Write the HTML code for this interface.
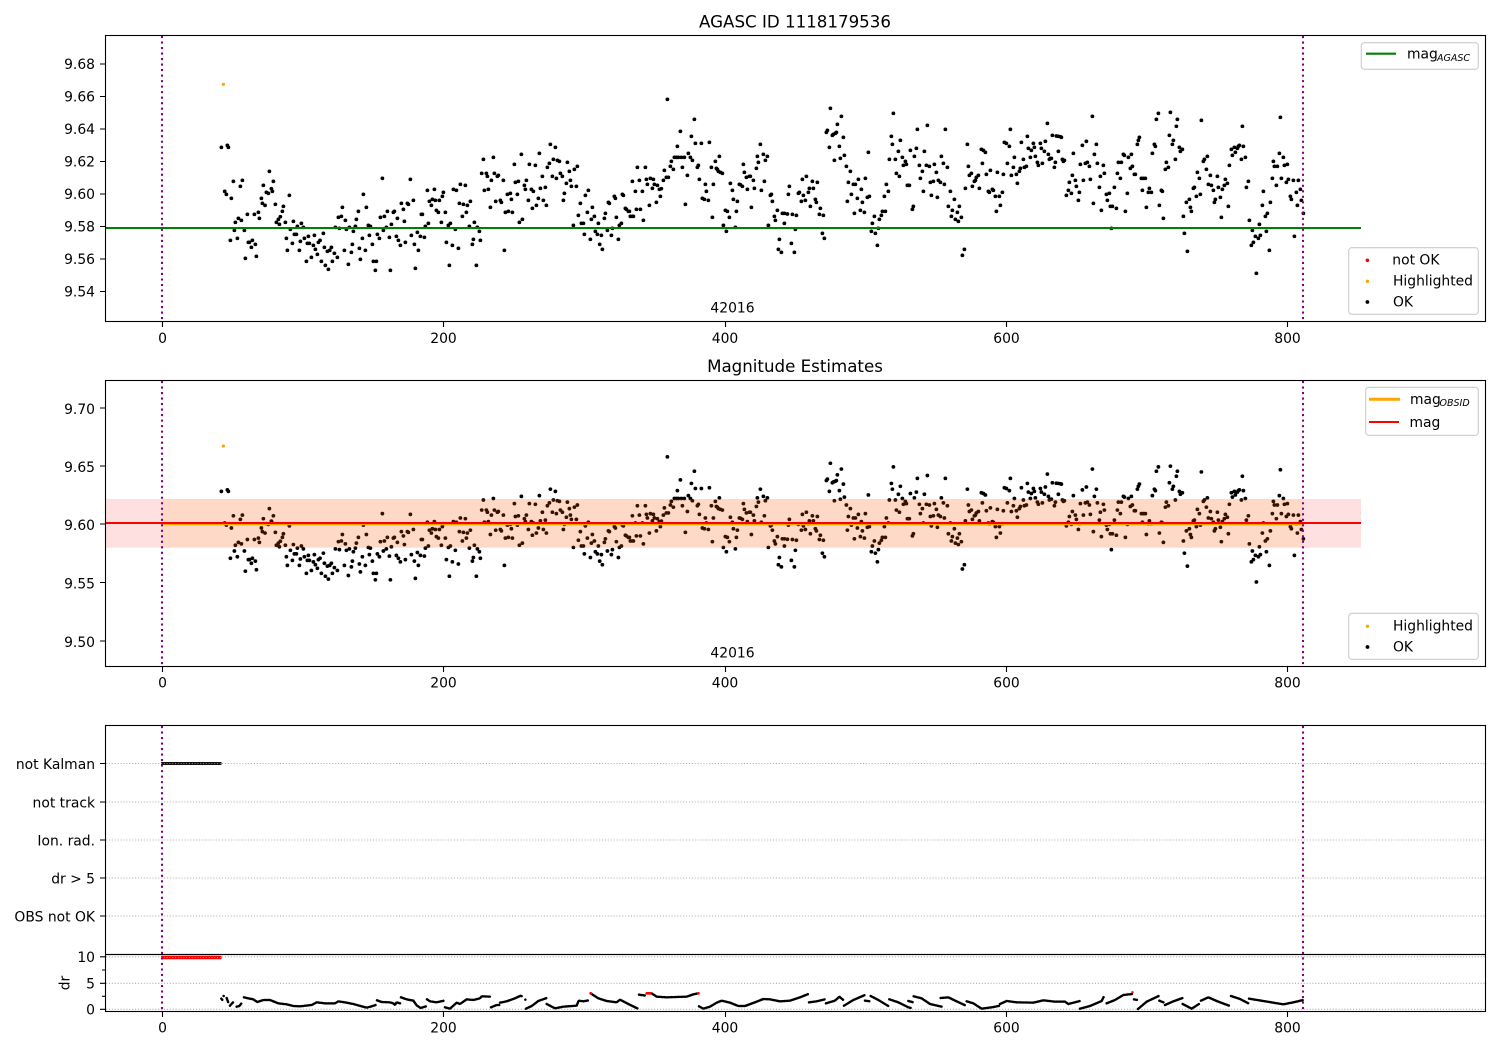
<!DOCTYPE html>
<html>
<head>
<meta charset="utf-8">
<title>AGASC ID 1118179536</title>
<style>
html,body{margin:0;padding:0;background:#fff;}
svg{display:block;}
text{font-family:"DejaVu Sans",sans-serif;font-size:13.89px;fill:#000;}
.r{text-anchor:end;}
.m{text-anchor:middle;}
.t{font-size:16.67px;text-anchor:middle;}
.i{font-style:italic;font-size:9.5px;}
.a{fill:none;stroke:#000;stroke-width:1.1;}
.k{stroke:#000;stroke-width:1.1;fill:none;}
.g{stroke:#b0b0b0;stroke-width:1.1;stroke-dasharray:1.1,1.8;fill:none;}
.v{stroke:#800080;stroke-width:2.08;stroke-dasharray:2.08,3.43;fill:none;}
.l{fill:#fff;fill-opacity:.8;stroke:#ccc;stroke-width:1.1;}
.d{fill:none;stroke:#000;stroke-width:7.5;stroke-linejoin:round;stroke-linecap:round;stroke-dasharray:.1,4.2;}
</style>
</head>
<body>
<svg width="1500" height="1050" viewBox="0 0 1500 1050" xmlns="http://www.w3.org/2000/svg">
<defs>
<path id="p1" fill="none" stroke="#000" stroke-width="3.7" stroke-linecap="round" vector-effect="non-scaling-stroke" d="M364 352h.3M382 346h.3M385 352h.3M374 484h.3M379 493h.3M394 505h.3M400 454h.3M427 451h.3M421 469h.3M406 577h.3M415 565h.3M424 571h.3M403 601h.3M391 631h.3M412 625h.3M433 601h.3M442 553h.3M445 637h.3M448 637h.3M457 631h.3M454 652h.3M466 643h.3M436 685h.3M469 679h.3M463 553h.3M475 547h.3M478 565h.3M484 505h.3M487 520h.3M495 526h.3M490 466h.3M499 487h.3M505 490h.3M508 424h.3M514 476h.3M517 484h.3M520 454h.3M526 523h.3M529 577h.3M535 568h.3M538 583h.3M541 560h.3M547 544h.3M550 529h.3M556 577h.3M568 496h.3M559 625h.3M562 661h.3M571 598h.3M577 640h.3M580 574h.3M583 613h.3M589 613h.3M592 589h.3M598 661h.3M601 634h.3M604 580h.3M610 592h.3M613 625h.3M619 694h.3M622 640h.3M625 619h.3M628 640h.3M634 682h.3M640 646h.3M643 616h.3M646 658h.3M652 673h.3M655 637h.3M660 631h.3M664 694h.3M670 610h.3M673 652h.3M676 706h.3M682 664h.3M685 718h.3M689 661h.3M694 652h.3M697 694h.3M703 670h.3M712 682h.3M706 592h.3M718 595h.3M715 562h.3M724 559h.3M727 532h.3M733 661h.3M736 571h.3M739 598h.3M745 703h.3M748 592h.3M754 667h.3M757 643h.3M760 604h.3M766 589h.3M769 568h.3M775 544h.3M778 655h.3M781 688h.3M787 625h.3M790 493h.3M796 661h.3M799 532h.3M805 586h.3M808 616h.3M811 589h.3M817 643h.3M820 694h.3M826 721h.3M829 694h.3M832 613h.3M838 625h.3M841 562h.3M847 445h.3M850 601h.3M853 559h.3M859 592h.3M862 544h.3M868 622h.3M871 721h.3M874 583h.3M880 547h.3M883 544h.3M889 619h.3M892 565h.3M895 631h.3M901 646h.3M904 520h.3M910 538h.3M913 574h.3M916 637h.3M922 520h.3M925 523h.3M931 448h.3M934 616h.3M940 511h.3M943 643h.3M946 715h.3M952 607h.3M955 661h.3M961 619h.3M964 553h.3M967 553h.3M973 622h.3M976 589h.3M982 481h.3M985 580h.3M988 514h.3M994 526h.3M997 508h.3M1003 478h.3M1006 511h.3M1009 541h.3M1015 547h.3M1018 511h.3M1024 577h.3M1027 499h.3M1030 487h.3M1036 547h.3M1039 637h.3M1045 586h.3M1048 706h.3M1051 580h.3M1057 646h.3M1060 478h.3M1066 598h.3M1069 481h.3M1075 655h.3M1078 520h.3M1081 463h.3M1087 559h.3M1090 523h.3M1096 466h.3M1099 547h.3M1102 526h.3M1108 589h.3M1111 514h.3M1117 643h.3M1120 628h.3M1123 577h.3M1129 706h.3M1132 592h.3M1138 604h.3M1141 631h.3M1145 430h.3M1150 388h.3M1153 481h.3M1159 430h.3M1162 439h.3M1165 478h.3M1171 532h.3M1174 451h.3M1180 382h.3M1183 430h.3M1187 514h.3M1192 439h.3M1195 436h.3M1201 511h.3M1204 517h.3M1210 451h.3M1213 661h.3M1216 547h.3M1222 493h.3M1225 544h.3M1231 490h.3M1234 508h.3M1237 547h.3M1243 403h.3M1246 457h.3M1252 493h.3M1255 454h.3M1258 577h.3M1264 373h.3M1267 568h.3M1273 466h.3M1276 478h.3M1279 451h.3M1285 511h.3M1288 403h.3M1294 478h.3M1297 535h.3M1300 484h.3M1306 406h.3M1309 526h.3M1315 505h.3M1318 370h.3M1321 475h.3M1327 439h.3M1330 511h.3M1336 472h.3M1339 526h.3M1342 412h.3M1348 400h.3M1351 343h.3M1357 439h.3M1360 388h.3M1366 352h.3M1369 445h.3M1372 391h.3M1378 394h.3M1381 430h.3M1387 439h.3M1390 511h.3M1393 490h.3M1399 460h.3M1402 397h.3M1408 424h.3M1411 451h.3M1414 469h.3M1420 586h.3M1423 418h.3M1429 469h.3M1432 409h.3M1435 556h.3M1441 520h.3M1444 580h.3M1450 580h.3M1453 613h.3M1456 496h.3M1462 547h.3M1465 481h.3M1471 628h.3M1474 568h.3M1477 532h.3M1483 559h.3M1486 604h.3M1492 613h.3M1495 580h.3M1499 643h.3"/>
<path id="p2" fill="none" stroke="#000" stroke-width="3.7" stroke-linecap="round" vector-effect="non-scaling-stroke" d="M4 616h.3M7 658h.3M13 565h.3M16 550h.3M22 601h.3M25 517h.3M28 520h.3M34 616h.3M37 595h.3M43 499h.3M46 505h.3M49 562h.3M55 628h.3M58 586h.3M64 580h.3M67 493h.3M70 496h.3M76 535h.3M79 538h.3M85 544h.3M88 544h.3M91 559h.3M97 559h.3M100 559h.3M97 454h.3M106 484h.3M109 538h.3M112 412h.3M118 451h.3M121 538h.3M127 484h.3M130 571h.3M136 412h.3M139 448h.3M142 463h.3M148 526h.3M151 445h.3M157 475h.3M160 448h.3M163 463h.3M169 517h.3M172 466h.3M178 478h.3M181 499h.3M184 476h.3M190 451h.3M193 421h.3M199 442h.3M202 208h.3M205 442h.3M211 409h.3M214 394h.3M220 418h.3M223 382h.3M229 382h.3M232 349h.3M235 382h.3M241 304h.3M244 382h.3M247 412h.3M253 382h.3M256 523h.3M262 436h.3M265 370h.3M271 382h.3M274 319h.3M277 391h.3M283 268h.3M286 340h.3M292 412h.3M295 406h.3M298 448h.3M304 340h.3M307 505h.3M313 508h.3M316 463h.3M319 484h.3M325 511h.3M328 337h.3M334 412h.3M337 562h.3M340 463h.3M346 394h.3M349 415h.3M352 418h.3M358 379h.3M355 424h.3M361 427h.3M367 430h.3M370 586h.3M376 541h.3M379 604h.3M382 544h.3M388 562h.3M391 460h.3M397 481h.3M400 508h.3M406 592h.3M409 544h.3M412 514h.3M418 463h.3M421 464h.3M427 469h.3M430 403h.3M433 427h.3M439 442h.3M442 478h.3M448 439h.3M451 439h.3M454 532h.3M460 451h.3M463 475h.3M469 415h.3M472 379h.3M475 397h.3M481 343h.3M484 481h.3M490 373h.3M493 454h.3M496 391h.3M502 379h.3M505 586h.3M511 496h.3M514 493h.3M517 514h.3M523 559h.3M526 571h.3M532 541h.3M538 628h.3M535 658h.3M544 667h.3M547 550h.3M553 550h.3M553 580h.3M562 552h.3M565 493h.3M568 469h.3M574 640h.3M577 553h.3M583 667h.3M586 598h.3M589 556h.3M595 490h.3M598 487h.3M604 514h.3M607 448h.3M610 496h.3M616 511h.3M619 439h.3M625 487h.3M628 475h.3M631 529h.3M637 454h.3M640 475h.3M646 508h.3M649 517h.3M652 457h.3M658 553h.3M661 535h.3M667 610h.3M670 556h.3M673 625h.3M679 307h.3M682 301h.3M688 352h.3M691 235h.3M697 316h.3M700 313h.3M703 391h.3M706 310h.3M709 307h.3M712 283h.3M718 349h.3M721 385h.3M724 259h.3M730 322h.3M733 376h.3M739 409h.3M742 514h.3M745 457h.3M751 424h.3M754 493h.3M760 463h.3M763 550h.3M766 463h.3M772 505h.3M775 448h.3M781 541h.3M784 478h.3M787 517h.3M793 547h.3M796 445h.3M802 502h.3M805 367h.3M808 499h.3M814 604h.3M817 580h.3M823 559h.3M826 610h.3M832 646h.3M835 595h.3M838 568h.3M844 556h.3M847 544h.3M853 499h.3M856 544h.3M859 463h.3M865 484h.3M868 388h.3M874 319h.3M877 343h.3M880 250h.3M886 388h.3M889 430h.3M895 364h.3M898 439h.3M901 331h.3M907 382h.3M910 406h.3M916 394h.3M919 403h.3M922 466h.3M925 466h.3M928 466h.3M931 361h.3M937 538h.3M940 529h.3M943 379h.3M949 355h.3M952 298h.3M958 406h.3M961 445h.3M967 424h.3M970 484h.3M973 364h.3M979 406h.3M982 286h.3M988 409h.3M991 457h.3M994 496h.3M1000 454h.3M1003 403h.3M1009 427h.3M1012 502h.3M1015 451h.3M1021 457h.3M1024 379h.3M1030 400h.3M1033 463h.3M1036 298h.3M1042 412h.3M1045 529h.3M1051 484h.3M1054 559h.3M1057 541h.3M1063 508h.3M1066 568h.3M1072 547h.3M1075 574h.3M1078 529h.3M1084 562h.3M1087 676h.3M1093 658h.3M1096 475h.3M1102 343h.3M1105 409h.3M1108 436h.3M1114 430h.3M1117 469h.3M1123 454h.3M1126 451h.3M1129 442h.3M1135 436h.3M1138 475h.3M1144 358h.3M1147 400h.3M1150 361h.3M1156 367h.3M1159 433h.3M1165 484h.3M1168 487h.3M1171 421h.3M1177 478h.3M1180 481h.3M1186 499h.3M1189 544h.3M1192 427h.3M1198 499h.3M1201 526h.3M1207 487h.3M1210 433h.3M1213 337h.3M1219 340h.3M1222 400h.3M1228 349h.3M1231 298h.3M1234 436h.3M1240 412h.3M1243 382h.3M1249 433h.3M1252 460h.3M1258 424h.3M1261 415h.3M1264 337h.3M1270 388h.3M1273 412h.3M1279 409h.3M1282 319h.3M1285 355h.3M1291 382h.3M1294 361h.3M1300 340h.3M1303 352h.3M1306 379h.3M1312 397h.3M1315 406h.3M1321 340h.3M1324 355h.3M1327 400h.3M1333 364h.3M1336 334h.3M1342 280h.3M1345 373h.3M1348 388h.3"/>
<path id="p3" fill="none" stroke="#000" stroke-width="3.7" stroke-linecap="round" vector-effect="non-scaling-stroke" d="M31 385h.3M34 385h.3M37 316h.3M43 412h.3M46 397h.3M49 318h.3M55 319h.3M55 364h.3M61 320h.3M64 322h.3M67 388h.3M70 394h.3M73 391h.3M79 496h.3M85 481h.3M88 457h.3M94 490h.3M97 436h.3M100 370h.3M106 451h.3M109 469h.3M115 511h.3M118 487h.3M121 403h.3M127 346h.3M130 451h.3M136 400h.3M139 334h.3M142 397h.3M148 409h.3M151 448h.3M157 259h.3M160 520h.3M163 373h.3M169 343h.3M172 400h.3M178 472h.3M181 439h.3M184 541h.3M190 406h.3M193 430h.3M199 493h.3M202 511h.3M208 490h.3M211 529h.3M214 595h.3M217 529h.3M223 472h.3M229 535h.3M232 430h.3M235 397h.3M241 445h.3M244 397h.3M250 373h.3M256 544h.3M253 376h.3M262 490h.3M265 382h.3M271 415h.3M274 373h.3M277 409h.3M283 433h.3M286 433h.3M292 343h.3M295 331h.3M298 322h.3M304 445h.3M307 481h.3M310 445h.3M316 445h.3M319 532h.3M325 487h.3M328 475h.3M334 487h.3M337 370h.3M343 343h.3M346 349h.3M349 268h.3M355 250h.3M358 526h.3M364 481h.3M367 484h.3M370 565h.3M376 418h.3M379 397h.3M385 412h.3M388 316h.3M391 247h.3M397 343h.3M400 331h.3M406 388h.3M409 289h.3M412 268h.3M418 352h.3M421 364h.3M427 358h.3M430 559h.3M433 610h.3M439 517h.3M442 664h.3M448 508h.3M451 532h.3M454 544h.3M460 475h.3M463 472h.3M469 499h.3M472 427h.3M478 445h.3M481 493h.3M484 271h.3M490 394h.3M493 388h.3M499 418h.3M502 379h.3M505 463h.3M511 436h.3M514 466h.3M520 481h.3M523 517h.3M526 508h.3M532 439h.3M535 472h.3M541 502h.3M544 562h.3M547 478h.3M553 466h.3M556 448h.3M562 460h.3M565 529h.3M568 406h.3M574 358h.3M577 376h.3M583 352h.3M586 367h.3M592 355h.3M595 349h.3M598 346h.3M604 388h.3M607 289h.3M610 349h.3M616 382h.3M619 472h.3M625 454h.3M628 571h.3M634 646h.3M637 601h.3M640 637h.3M646 619h.3M649 730h.3M655 625h.3M658 583h.3M661 616h.3M667 526h.3M670 484h.3M676 559h.3M679 604h.3M682 550h.3M688 661h.3M691 517h.3M697 445h.3M700 394h.3M703 409h.3M709 466h.3M712 409h.3M718 370h.3M721 262h.3M724 445h.3M730 382h.3M733 406h.3M739 457h.3M742 403h.3M745 448h.3M751 499h.3M754 508h.3M760 451h.3M763 619h.3M769 487h.3M772 526h.3M775 451h.3M781 478h.3M784 511h.3M790 550h.3"/>
<path id="po" fill="none" stroke="#ffa500" stroke-width="3.2" stroke-linecap="round" vector-effect="non-scaling-stroke" d="M370 163h.3"/>
</defs>

<rect width="1500" height="1050" fill="#fff"/>

<!-- PANEL 1 -->
<g transform="matrix(.33333,0,0,.33333,100,30)"><use href="#p1"/><use href="#po"/></g>
<g transform="matrix(.33333,0,0,.33333,600,30)"><use href="#p2"/></g>
<g transform="matrix(.33333,0,0,.33333,1040,30)"><use href="#p3"/></g>
<line x1="105.5" y1="228" x2="1361" y2="228" stroke="#008000" stroke-width="2.08"/>
<line class="v" x1="162" y1="36" x2="162" y2="321"/>
<line class="v" x1="1303" y1="36" x2="1303" y2="321"/>
<rect class="a" x="105.5" y="35.5" width="1380" height="286"/>
<path class="k" d="M105 64h-5M105 96.5h-5M105 129h-5M105 161.5h-5M105 194h-5M105 226.5h-5M105 259h-5M105 291.5h-5M162.5 322v5M443.5 322v5M725.5 322v5M1006.5 322v5M1287.5 322v5"/>
<text class="r" x="95" y="69">9.68</text>
<text class="r" x="95" y="101.5">9.66</text>
<text class="r" x="95" y="134">9.64</text>
<text class="r" x="95" y="166.5">9.62</text>
<text class="r" x="95" y="199">9.60</text>
<text class="r" x="95" y="231.5">9.58</text>
<text class="r" x="95" y="264">9.56</text>
<text class="r" x="95" y="296.5">9.54</text>
<text class="m" x="162.5" y="343">0</text>
<text class="m" x="443.5" y="343">200</text>
<text class="m" x="725" y="343">400</text>
<text class="m" x="1006.5" y="343">600</text>
<text class="m" x="1287.5" y="343">800</text>
<text class="t" x="795" y="27.5">AGASC ID 1118179536</text>
<text class="m" x="732.5" y="312.5">42016</text>

<rect class="l" x="1361.3" y="42.7" width="117" height="26.6" rx="3"/>
<line x1="1366" y1="53.7" x2="1396" y2="53.7" stroke="#008000" stroke-width="2.08"/>
<text x="1407" y="58.5">mag</text><text class="i" x="1437" y="61">AGASC</text>

<rect class="l" x="1348.7" y="247.7" width="129.6" height="66.6" rx="3"/>
<circle cx="1367.4" cy="260.3" r="1.8" fill="#f00"/>
<circle cx="1367.4" cy="281.3" r="1.7" fill="#ffa500"/>
<circle cx="1367.4" cy="302" r="1.9" fill="#000"/>
<text x="1392.3" y="264.5">not OK</text>
<text x="1393" y="285.5">Highlighted</text>
<text x="1393" y="306.3">OK</text>

<!-- PANEL 2 -->
<g transform="matrix(.33333,0,0,.2397,100,406.97)"><use href="#p1"/><use href="#po"/></g>
<g transform="matrix(.33333,0,0,.2397,600,406.97)"><use href="#p2"/></g>
<g transform="matrix(.33333,0,0,.2397,1040,406.97)"><use href="#p3"/></g>
<rect x="105.5" y="499" width="1255.5" height="48.7" fill="#ff0000" fill-opacity=".12"/>
<rect x="162" y="499" width="1141" height="48.7" fill="#ffa500" fill-opacity=".11"/>
<line x1="162" y1="524.2" x2="1303" y2="524.2" stroke="#ffa500" stroke-width="2.08"/>
<line x1="105.5" y1="523" x2="1361" y2="523" stroke="#f00" stroke-width="2.08"/>
<line class="v" x1="162" y1="381" x2="162" y2="666"/>
<line class="v" x1="1303" y1="381" x2="1303" y2="666"/>
<rect class="a" x="105.5" y="380.5" width="1380" height="286"/>
<path class="k" d="M105 408h-5M105 466h-5M105 524h-5M105 582.5h-5M105 641h-5M162.5 667v5M443.5 667v5M725.5 667v5M1006.5 667v5M1287.5 667v5"/>
<text class="r" x="95" y="414">9.70</text>
<text class="r" x="95" y="472">9.65</text>
<text class="r" x="95" y="530">9.60</text>
<text class="r" x="95" y="588.5">9.55</text>
<text class="r" x="95" y="647">9.50</text>
<text class="m" x="162.5" y="687.5">0</text>
<text class="m" x="443.5" y="687.5">200</text>
<text class="m" x="725" y="687.5">400</text>
<text class="m" x="1006.5" y="687.5">600</text>
<text class="m" x="1287.5" y="687.5">800</text>
<text class="t" x="795" y="372">Magnitude Estimates</text>
<text class="m" x="732.5" y="657.5">42016</text>

<rect class="l" x="1365.7" y="387.3" width="112.6" height="48" rx="3"/>
<line x1="1369" y1="399.3" x2="1400" y2="399.3" stroke="#ffa500" stroke-width="3"/>
<line x1="1369" y1="422" x2="1399" y2="422" stroke="#f00" stroke-width="2.08"/>
<text x="1410" y="404">mag</text><text class="i" x="1439.5" y="406">OBSID</text>
<text x="1409.5" y="426.8">mag</text>

<rect class="l" x="1348.7" y="613.3" width="129.6" height="46" rx="3"/>
<circle cx="1367.5" cy="626.3" r="1.7" fill="#ffa500"/>
<circle cx="1367.5" cy="647" r="1.9" fill="#000"/>
<text x="1393" y="630.5">Highlighted</text>
<text x="1393" y="651.3">OK</text>

<!-- PANEL 3 -->
<path class="g" d="M106 763.5H1485M106 802H1485M106 840H1485M106 878H1485M106 916H1485"/>
<line x1="161" y1="763.5" x2="221.5" y2="763.5" stroke="#111" stroke-width="3"/>
<line x1="161" y1="763.5" x2="221.5" y2="763.5" stroke="#888" stroke-width="1" stroke-dasharray="1,1.8"/>
<rect class="a" x="105.5" y="725.5" width="1380" height="229"/>
<path class="k" d="M105 763.5h-5M105 802h-5M105 840h-5M105 878h-5M105 916h-5"/>
<text class="r" x="95" y="769">not Kalman</text>
<text class="r" x="95" y="807.5">not track</text>
<text class="r" x="95" y="845.5">Ion. rad.</text>
<text class="r" x="95" y="883.5">dr &gt; 5</text>
<text class="r" x="95" y="921.5">OBS not OK</text>

<!-- PANEL 4 -->
<path class="g" d="M106 956.8H1485M106 983.3H1485M106 1009.3H1485"/>
<g transform="translate(0,940) scale(.33333)">
<path class="d" d="M664 176l5 6M671 168h3M680 174l5 14M690 197l8 -9l4 -3M710 200l8 -2l8 -10M732 172L745 175L760 178L772 186L790 180L810 180L820 184L835 190L860 193L880 198L900 199L935 195L950 187L975 190L1005 190L1015 184L1040 188L1060 192L1085 199L1100 203L1115 199L1130 194M1131 181L1145 186L1170 187L1180 190L1185 195L1190 187L1203 191M1203 172L1220 178L1240 182L1250 196L1262 204L1278 199M1281 178L1290 184L1310 187L1332 182M1335 202L1350 206L1370 188L1380 192L1400 178L1420 180L1440 175L1445 169L1473 170M1473 202L1490 195L1500 195"/>
</g>
<g transform="translate(500,940) scale(.33333)">
<path class="d" d="M0 188L20 184L45 175L62 167L68 170M76 179h1M78 206L95 198L115 183L140 174M140 192L165 205L190 200L230 197L236 182L250 184L266 181M272 160L295 175L320 183L350 187L360 179L385 192L414 206M417 164L438 167M440 160L455 160L470 170L500 172L560 170L580 163L595 160M597 199L610 206L630 200L650 188L665 182L690 188L715 198L735 198L770 185L790 177L810 178L840 184L870 182L900 172L925 162M927 187L950 184L975 178M978 190L1005 182L1018 170L1030 180M1032 197L1060 180L1095 165M1095 182L1110 184M1112 168L1135 180L1165 198M1168 178L1195 187L1225 202L1233 204M1225 183L1240 187M1241 169L1265 175L1290 192L1325 200M1322 174L1345 172L1370 184L1398 197M1400 184L1420 190L1445 206L1475 202L1500 197"/>
<path fill="none" stroke="#f00" stroke-width="8" stroke-linecap="round" d="M272 160h.5M441 160h10M595 160h.5"/>
</g>
<g transform="translate(1000,940) scale(.33333)">
<path class="d" d="M0 192L20 183L50 187L100 188L130 181L165 185L195 185L205 192L240 183M240 206L270 198L305 183L312 169M320 190L345 180L370 165L397 162M402 178L413 180M414 207L440 185L476 168M478 182L490 187M495 195L520 184L548 174M548 192L575 206L600 190M603 182L625 172L650 183L690 198M693 168L720 177L745 190M747 176L790 183L850 193L880 187L910 180"/>
<path fill="none" stroke="#f00" stroke-width="7" stroke-linecap="round" d="M397 157h.5"/>
</g>
<line x1="161" y1="957.5" x2="221.5" y2="957.5" stroke="#f00" stroke-width="3.4"/>
<line x1="161" y1="957.5" x2="221.5" y2="957.5" stroke="#f77" stroke-width="1" stroke-dasharray="1,1.8"/>
<line class="v" x1="162" y1="726" x2="162" y2="1011"/>
<line class="v" x1="1303" y1="726" x2="1303" y2="1011"/>
<rect class="a" x="105.5" y="954.5" width="1380" height="57"/>
<path class="k" d="M105 956.8h-5M105 983.3h-5M105 1009.3h-5M105 970h-3M105 996.3h-3M162.5 1012v5M443.5 1012v5M725.5 1012v5M1006.5 1012v5M1287.5 1012v5"/>
<text class="r" x="95" y="962">10</text>
<text class="r" x="95" y="988.5">5</text>
<text class="r" x="95" y="1014.3">0</text>
<text class="m" transform="translate(69.5,983) rotate(-90)">dr</text>
<text class="m" x="162.5" y="1032.5">0</text>
<text class="m" x="443.5" y="1032.5">200</text>
<text class="m" x="725" y="1032.5">400</text>
<text class="m" x="1006.5" y="1032.5">600</text>
<text class="m" x="1287.5" y="1032.5">800</text>
</svg>
</body>
</html>
